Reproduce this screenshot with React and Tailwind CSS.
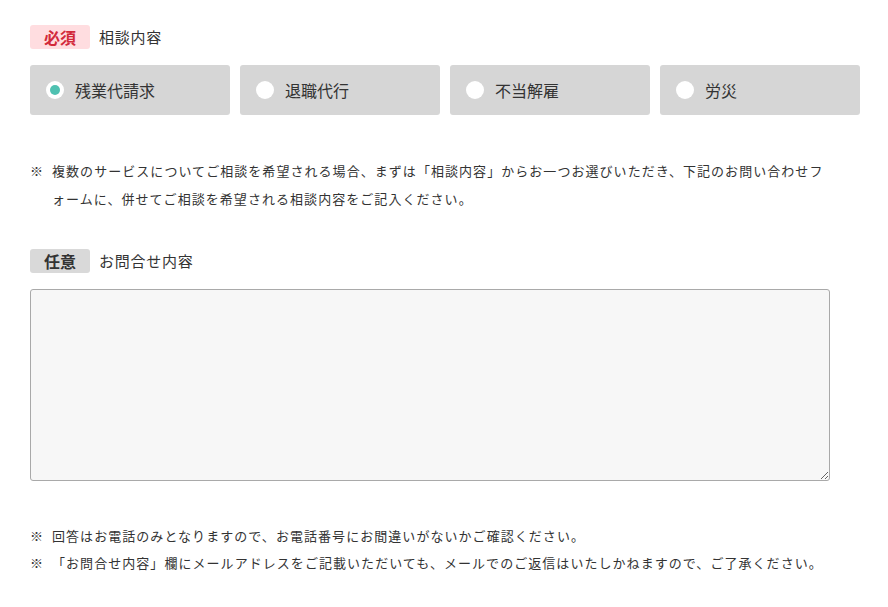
import { useState } from 'react';

const OPTIONS = ['残業代請求', '退職代行', '不当解雇', '労災'];

const Note = ({ children }) => (
  <div className="flex">
    <span className="w-[22px] shrink-0">※</span>
    <span>{children}</span>
  </div>
);

export default function App() {
  const [selected, setSelected] = useState(OPTIONS[0]);

  return (
    <div className="pl-[30px] pt-[25px] pb-8 text-[#333] font-['Noto_Sans_CJK_JP','Noto_Sans',sans-serif]">
      {/* 相談内容 */}
      <div className="flex items-center gap-[9px] h-6">
        <span className="flex items-center justify-center w-[60px] h-6 rounded-[3px] bg-[#ffdde0] text-[#d22a3b] text-base font-bold">
          必須
        </span>
        <span className="text-[15px] tracking-[0.75px]">相談内容</span>
      </div>

      <div className="mt-4 grid grid-cols-4 gap-[10px] w-[830px]">
        {OPTIONS.map(o => (
          <label
            key={o}
            onClick={() => setSelected(o)}
            className="flex items-center gap-[11px] h-[50px] pl-4 rounded-[3px] bg-[#d6d6d6] cursor-pointer"
          >
            <span className="flex items-center justify-center w-[18px] h-[18px] rounded-full bg-white">
              {selected === o && <span className="w-[10px] h-[10px] rounded-full bg-[#4fc1b1]" />}
            </span>
            <span className="text-base">{o}</span>
          </label>
        ))}
      </div>

      <div className="mt-[42px] w-[800px] text-[13px] leading-[28px] tracking-[1.05px]">
        <Note>
          複数のサービスについてご相談を希望される場合、まずは「相談内容」からお一つお選びいただき、下記のお問い合わせフォームに、併せてご相談を希望される相談内容をご記入ください。
        </Note>
      </div>

      {/* お問合せ内容 */}
      <div className="mt-[36px] flex items-center gap-[9px] h-6">
        <span className="flex items-center justify-center w-[60px] h-6 rounded-[3px] bg-[#d9d9d9] text-base font-bold">
          任意
        </span>
        <span className="text-[15px] tracking-[0.75px]">お問合せ内容</span>
      </div>

      <textarea className="mt-4 block w-[800px] h-[192px] rounded-[3px] border border-[#a9a9a9] bg-[#f7f7f7] p-2 text-sm outline-none" />

      <div className="mt-[41px] text-[13px] leading-[27px] tracking-[1.05px]">
        <Note>回答はお電話のみとなりますので、お電話番号にお間違いがないかご確認ください。</Note>
        <Note>「お問合せ内容」欄にメールアドレスをご記載いただいても、メールでのご返信はいたしかねますので、ご了承ください。</Note>
      </div>
    </div>
  );
}
